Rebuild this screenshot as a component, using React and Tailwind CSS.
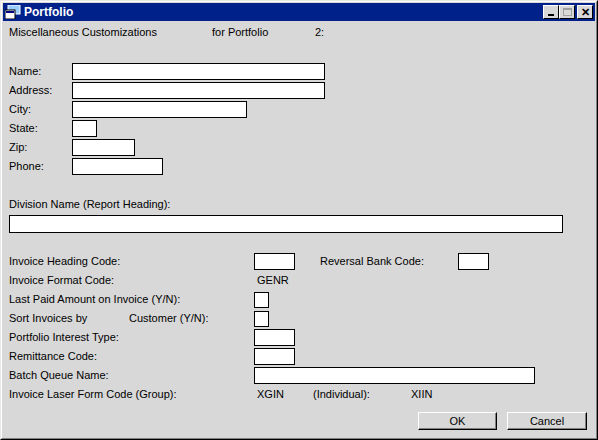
export default function App() {
  const Box = ({ w, h = "h-[17px]" }) => (
    <div className={`${w} ${h} bg-white border border-black shrink-0`} />
  );
  const Row = ({ children, cls = "" }) => (
    <div className={`flex items-center h-[19px] ${cls}`}>{children}</div>
  );
  const Btn = ({ label, w }) => (
    <div className={`${w} h-[18px] flex items-center justify-center bg-[#d8d8d8] border border-t-white border-l-white border-r-black border-b-black shadow-[inset_-1px_-1px_0_#808080]`}>
      {label}
    </div>
  );
  return (
    <div className="w-[598px] h-[440px] bg-[#d8d8d8] text-[11px] text-black border border-t-[#e8e8e8] border-l-[#e8e8e8] border-r-black border-b-black" style={{ fontFamily: '"Liberation Sans", Arial, sans-serif' }}>
      <div className="border border-t-white border-l-white border-r-[#808080] border-b-[#808080] h-full p-[1px]">
        <div className="h-[18px] bg-[#00208a] flex items-center pl-[2px] pr-[2px]">
          <svg width="16" height="14" viewBox="0 0 16 14" className="mr-[3px]">
            <rect x="3" y="0" width="12" height="9" fill="#9cf" stroke="#fff" />
            <rect x="0" y="5" width="10" height="9" fill="#fff" stroke="#000" />
            <rect x="1" y="6" width="8" height="2" fill="#000080" />
          </svg>
          <span className="text-white font-bold text-[12px]">Portfolio</span>
          <div className="ml-auto flex items-center">
            <div className="w-[16px] h-[14px] bg-[#d8d8d8] border border-t-white border-l-white border-r-black border-b-black flex items-end justify-center pb-[2px]"><div className="w-[6px] h-[2px] bg-black" /></div>
            <div className="w-[16px] h-[14px] bg-[#d8d8d8] border border-t-white border-l-white border-r-black border-b-black flex items-center justify-center"><div className="w-[9px] h-[8px] border border-[#a0a0a0] border-t-2" /></div>
            <div className="ml-[2px] w-[16px] h-[14px] bg-[#d8d8d8] border border-t-white border-l-white border-r-black border-b-black flex items-center justify-center font-bold text-[11px] leading-none">✕</div>
          </div>
        </div>
        <div className="pl-[6px]">
          <Row cls="mt-[2px]">
            <span className="w-[203px]">Miscellaneous Customizations</span>
            <span className="w-[103px]">for Portfolio</span>
            <span>2:</span>
          </Row>
          <div className="mt-[20px]">
            <Row><span className="w-[63px]">Name:</span><Box w="w-[253px]" /></Row>
            <Row><span className="w-[63px]">Address:</span><Box w="w-[253px]" /></Row>
            <Row><span className="w-[63px]">City:</span><Box w="w-[175px]" /></Row>
            <Row><span className="w-[63px]">State:</span><Box w="w-[25px]" /></Row>
            <Row><span className="w-[63px]">Zip:</span><Box w="w-[63px]" /></Row>
            <Row><span className="w-[63px]">Phone:</span><Box w="w-[91px]" /></Row>
          </div>
          <Row cls="mt-[19px]">Division Name (Report Heading):</Row>
          <div className="mt-[1px]"><Box w="w-[554px]" h="h-[18px]" /></div>
          <div className="mt-[19px]">
            <Row>
              <span className="w-[245px]">Invoice Heading Code:</span><Box w="w-[41px]" />
              <span className="ml-[25px] w-[138px]">Reversal Bank Code:</span><Box w="w-[31px]" />
            </Row>
            <Row><span className="w-[248px]">Invoice Format Code:</span>GENR</Row>
            <Row><span className="w-[245px]">Last Paid Amount on Invoice (Y/N):</span><Box w="w-[15px]" h="h-[16px]" /></Row>
            <Row><span className="w-[120px]">Sort Invoices by</span><span className="w-[125px]">Customer (Y/N):</span><Box w="w-[15px]" h="h-[16px]" /></Row>
            <Row><span className="w-[245px]">Portfolio Interest Type:</span><Box w="w-[41px]" /></Row>
            <Row><span className="w-[245px]">Remittance Code:</span><Box w="w-[41px]" /></Row>
            <Row><span className="w-[245px]">Batch Queue Name:</span><Box w="w-[281px]" /></Row>
            <Row><span className="w-[248px]">Invoice Laser Form Code (Group):</span><span className="w-[56px]">XGIN</span><span className="w-[98px]">(Individual):</span>XIIN</Row>
          </div>
          <div className="flex justify-end gap-[10px] mr-[8px] mt-[8px]">
            <Btn label="OK" w="w-[79px]" />
            <Btn label="Cancel" w="w-[80px]" />
          </div>
        </div>
      </div>
    </div>
  );
}
